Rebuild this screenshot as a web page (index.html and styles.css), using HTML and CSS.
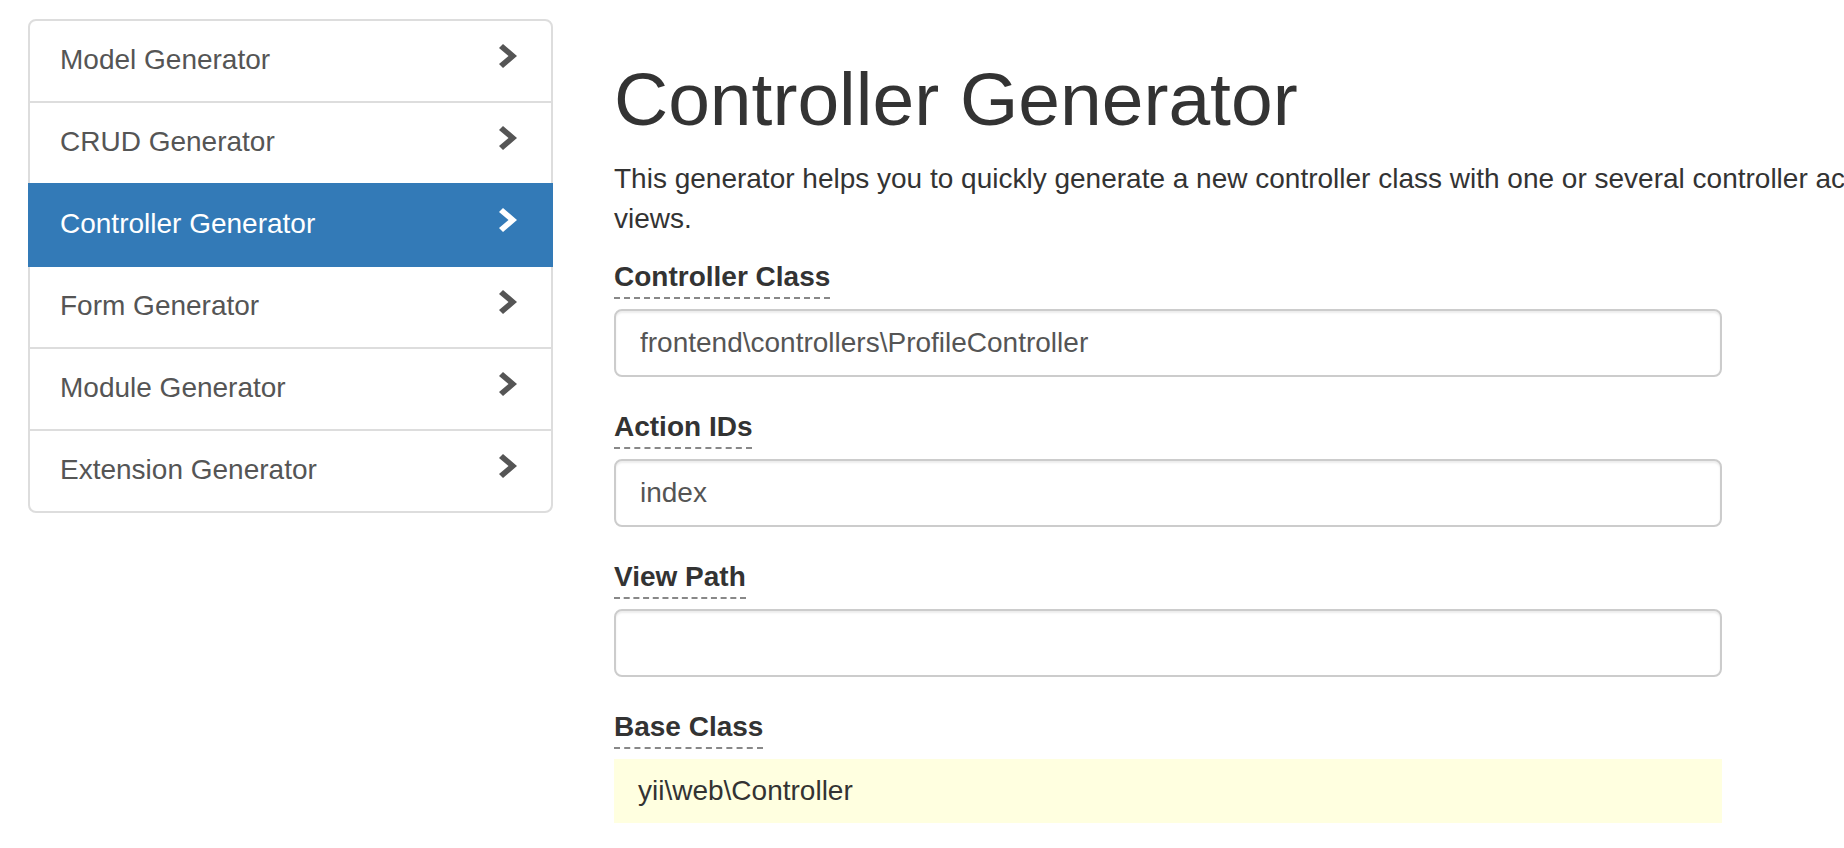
FILE: index.html
```html
<!DOCTYPE html>
<html lang="en">
<head>
<meta charset="utf-8">
<title>Controller Generator</title>
<link rel="stylesheet" href="styles.css">
</head>
<body>
<div class="page">
  <nav class="sidebar">
    <a class="item" href="#"><span>Model Generator</span><svg class="chev" viewBox="0 0 18 24" width="18" height="24"><polygon points="4,0 18,12 4,24 0,20 9.5,12 0,4"/></svg></a>
    <a class="item" href="#"><span>CRUD Generator</span><svg class="chev" viewBox="0 0 18 24" width="18" height="24"><polygon points="4,0 18,12 4,24 0,20 9.5,12 0,4"/></svg></a>
    <a class="item active" href="#"><span>Controller Generator</span><svg class="chev" viewBox="0 0 18 24" width="18" height="24"><polygon points="4,0 18,12 4,24 0,20 9.5,12 0,4"/></svg></a>
    <a class="item" href="#"><span>Form Generator</span><svg class="chev" viewBox="0 0 18 24" width="18" height="24"><polygon points="4,0 18,12 4,24 0,20 9.5,12 0,4"/></svg></a>
    <a class="item" href="#"><span>Module Generator</span><svg class="chev" viewBox="0 0 18 24" width="18" height="24"><polygon points="4,0 18,12 4,24 0,20 9.5,12 0,4"/></svg></a>
    <a class="item" href="#"><span>Extension Generator</span><svg class="chev" viewBox="0 0 18 24" width="18" height="24"><polygon points="4,0 18,12 4,24 0,20 9.5,12 0,4"/></svg></a>
  </nav>
  <main class="main">
    <h1 class="title">Controller Generator</h1>
    <p class="desc">This generator helps you to quickly generate a new controller class with one or several controller actions and their corresponding views.</p>
    <form class="form">
      <div class="group">
        <label class="label">Controller Class</label>
        <input class="field" type="text" value="frontend\controllers\ProfileController">
      </div>
      <div class="group">
        <label class="label">Action IDs</label>
        <input class="field" type="text" value="index">
      </div>
      <div class="group">
        <label class="label">View Path</label>
        <input class="field" type="text" value="">
      </div>
      <div class="group">
        <label class="label">Base Class</label>
        <div class="sticky">yii\web\Controller</div>
      </div>
    </form>
  </main>
</div>
</body>
</html>
```

FILE: styles.css
```css
html, body {
  margin: 0;
  padding: 0;
  overflow: hidden;
  background: #fff;
}

body {
  font-family: "Liberation Sans", Arial, Helvetica, sans-serif;
  font-size: 28px;
  line-height: 40px;
  color: #333;
}

.page {
  display: flex;
  align-items: flex-start;
  gap: 61px;
  padding: 19px 0 0 28px;
}

.sidebar {
  width: 525px;
  flex-shrink: 0;
  display: flex;
  flex-direction: column;
}

.item {
  position: relative;
  display: flex;
  justify-content: space-between;
  align-items: flex-start;
  padding: 19px 30px 21px;
  margin-bottom: -2px;
  border: 2px solid #ddd;
  background: #fff;
  color: #555;
  text-decoration: none;
}

.item:first-child {
  border-top-left-radius: 8px;
  border-top-right-radius: 8px;
}

.item:last-child {
  margin-bottom: 0;
  border-bottom-left-radius: 8px;
  border-bottom-right-radius: 8px;
}

.item.active {
  z-index: 2;
  background: #337ab7;
  border-color: #337ab7;
  color: #fff;
}

.chev {
  flex-shrink: 0;
  margin: 4px 4px 0 0;
  fill: #555;
}

.item.active .chev {
  fill: #fff;
}

.main {
  width: 1650px;
  flex-shrink: 0;
}

.title {
  margin: 41px 0 20px;
  font-size: 75px;
  line-height: 79px;
  font-weight: 400;
  color: #333;
}

.desc {
  margin: 0 0 18px;
  width: 1640px;
}

.form {
  width: 1108px;
}

.group {
  margin-bottom: 30px;
}

.label {
  display: block;
  width: fit-content;
  margin-bottom: 10px;
  font-weight: 700;
  color: #333;
  border-bottom: 2px dashed #888;
  cursor: help;
}

.field {
  display: block;
  box-sizing: border-box;
  width: 100%;
  height: 68px;
  padding: 12px 24px;
  margin: 0;
  font-family: inherit;
  font-size: 28px;
  line-height: 40px;
  color: #555;
  background: #fff;
  border: 2px solid #ccc;
  border-radius: 8px;
  box-shadow: inset 0 2px 2px rgba(0, 0, 0, 0.075);
  outline: none;
}

.sticky {
  padding: 12px 24px;
  background: #ffffe0;
  color: #333;
  white-space: pre;
}
```
